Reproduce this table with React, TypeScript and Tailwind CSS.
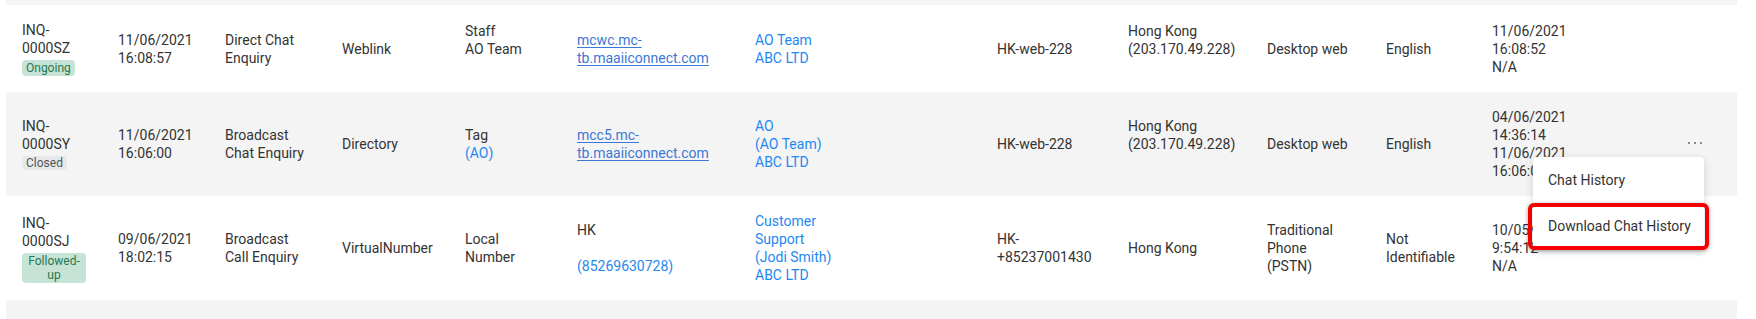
import React from "react";

type Cell = {
  lines: string[];
  tone?: "text" | "blue" | "link";
  blueFrom?: number;
};

type Row = {
  id: string[];
  status: "Ongoing" | "Closed" | "Followed-up";
  cells: Cell[];
  more?: boolean;
};

const rows: Row[] = [
  {
    id: ["INQ-", "0000SZ"],
    status: "Ongoing",
    cells: [
      { lines: ["11/06/2021", "16:08:57"] },
      { lines: ["Direct Chat", "Enquiry"] },
      { lines: ["Weblink"] },
      { lines: ["Staff", "AO Team", ""] },
      { lines: ["mcwc.mc-", "tb.maaiiconnect.com"], tone: "link" },
      { lines: ["AO Team", "ABC LTD"], tone: "blue" },
      { lines: ["HK-web-228"] },
      { lines: ["Hong Kong", "(203.170.49.228)", ""] },
      { lines: ["Desktop web"] },
      { lines: ["English"] },
      { lines: ["11/06/2021", "16:08:52", "N/A"] },
    ],
  },
  {
    id: ["INQ-", "0000SY"],
    status: "Closed",
    more: true,
    cells: [
      { lines: ["11/06/2021", "16:06:00"] },
      { lines: ["Broadcast", "Chat Enquiry"] },
      { lines: ["Directory"] },
      { lines: ["Tag", "(AO)"], blueFrom: 1 },
      { lines: ["mcc5.mc-", "tb.maaiiconnect.com"], tone: "link" },
      { lines: ["AO", "(AO Team)", "ABC LTD"], tone: "blue" },
      { lines: ["HK-web-228"] },
      { lines: ["Hong Kong", "(203.170.49.228)", ""] },
      { lines: ["Desktop web"] },
      { lines: ["English"] },
      { lines: ["04/06/2021", "14:36:14", "11/06/2021", "16:06:00"] },
    ],
  },
  {
    id: ["INQ-", "0000SJ"],
    status: "Followed-up",
    cells: [
      { lines: ["09/06/2021", "18:02:15"] },
      { lines: ["Broadcast", "Call Enquiry"] },
      { lines: ["VirtualNumber"] },
      { lines: ["Local", "Number"] },
      { lines: ["HK", "", "(85269630728)"], blueFrom: 2 },
      { lines: ["Customer", "Support", "(Jodi Smith)", "ABC LTD"], tone: "blue" },
      { lines: ["HK-", "+85237001430"] },
      { lines: ["Hong Kong"] },
      { lines: ["Traditional", "Phone", "(PSTN)"] },
      { lines: ["Not", "Identifiable"] },
      { lines: ["10/05/2021", "9:54:12", "N/A"] },
    ],
  },
];

function StatusBadge({ status }: { status: Row["status"] }) {
  if (status === "Closed") {
    return (
      <span className="mt-[3px] inline-block rounded-[4px] bg-[#e5e9ec] px-[4px] text-[12px] leading-[14px] text-[#555]">
        Closed
      </span>
    );
  }
  return (
    <span className="mt-[3px] inline-block max-w-[64px] rounded-[4px] bg-[#c6e3d6] px-[4px] py-[1px] text-center text-[12px] leading-[14px] text-[#24794f]">
      {status}
    </span>
  );
}

function CellBody({ cell }: { cell: Cell }) {
  if (cell.tone === "link") {
    return (
      <a href="#" className="text-[#3b78d4] underline underline-offset-2">
        {cell.lines[0]}
        <br />
        {cell.lines[1]}
      </a>
    );
  }
  return (
    <>
      {cell.lines.map((line, i) => {
        const blue =
          cell.tone === "blue" || (cell.blueFrom !== undefined && i >= cell.blueFrom);
        return (
          <div key={i} className={blue ? "text-[#1e88f0]" : ""}>
            {line || "\u00a0"}
          </div>
        );
      })}
    </>
  );
}

export default function App() {
  return (
    <div className="relative h-[319px] w-[1756px] overflow-hidden bg-white font-['Roboto','Liberation_Sans',sans-serif] text-[14px] leading-[18px] text-[#333]">
      <div className="ml-[6px] w-[1731px]">
        <div className="h-[5px] bg-[#f4f4f4]" />
        <table className="w-full table-fixed border-collapse">
          <colgroup>
            <col className="w-[96px]" />
            <col className="w-[107px]" />
            <col className="w-[117px]" />
            <col className="w-[123px]" />
            <col className="w-[112px]" />
            <col className="w-[178px]" />
            <col className="w-[242px]" />
            <col className="w-[131px]" />
            <col className="w-[139px]" />
            <col className="w-[119px]" />
            <col className="w-[106px]" />
            <col className="w-[196px]" />
            <col className="w-[65px]" />
          </colgroup>
          <tbody>
            {rows.map((row, r) => (
              <tr key={r} className={r % 2 === 1 ? "bg-[#f4f4f4]" : "bg-white"}>
                <td className="px-4 py-4 align-middle">
                  {row.id.map((l) => (
                    <div key={l}>{l}</div>
                  ))}
                  <StatusBadge status={row.status} />
                </td>
                {row.cells.map((cell, c) => (
                  <td key={c} className="px-4 py-4 align-middle">
                    <CellBody cell={cell} />
                  </td>
                ))}
                <td className="px-4 py-4 align-middle">
                  {row.more && (
                    <div className="flex items-center gap-[4px] pb-[3px]">
                      <span className="h-[2px] w-[2px] rounded-full bg-[#666]" />
                      <span className="h-[2px] w-[2px] rounded-full bg-[#666]" />
                      <span className="h-[2px] w-[2px] rounded-full bg-[#666]" />
                    </div>
                  )}
                </td>
              </tr>
            ))}
          </tbody>
        </table>
        <div className="h-[40px] bg-[#f4f4f4]" />
      </div>

      {/* row action menu */}
      <div className="absolute left-[1533px] top-[157px] w-[171px] rounded-[4px] bg-white shadow-[0_2px_8px_rgba(0,0,0,0.15)]">
        <div className="flex h-[46px] items-center whitespace-nowrap px-[15px] text-[14px]">Chat History</div>
        <div className="flex h-[46px] items-center whitespace-nowrap px-[15px] text-[14px]">Download Chat History</div>
      </div>
      <div className="absolute left-[1528px] top-[203px] h-[47px] w-[181px] rounded-[6px] border-4 border-[#f40000] shadow-[0_1px_4px_rgba(0,0,0,0.35)]" />
    </div>
  );
}
